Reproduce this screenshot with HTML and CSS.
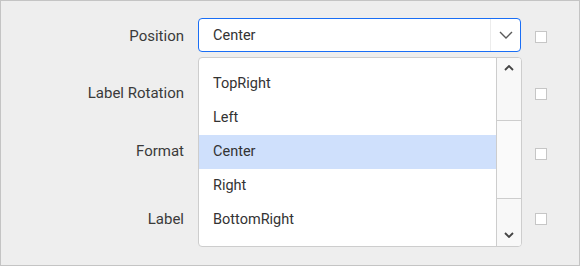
FILE: index.html
```html
<!DOCTYPE html>
<html lang="en">
<head>
    <meta charset="UTF-8">
    <title>Data Label Settings</title>
    <link rel="stylesheet" href="styles.css">
</head>
<body>
    <div class="panel">
        <div class="form-grid">
            <label class="field-label">Position</label>
            <div class="select">
                <span class="select-value">Center</span>
                <span class="select-toggle">
                    <svg width="14" height="8" viewBox="0 0 14 8"><path d="M1 1 L7 7 L13 1" fill="none" stroke="#5a5a5a" stroke-width="1.4"/></svg>
                </span>
            </div>
            <span class="check first"></span>

            <label class="field-label rotation">Label Rotation</label>
            <div class="spacer"></div>
            <span class="check"></span>

            <label class="field-label format">Format</label>
            <div class="spacer"></div>
            <span class="check"></span>

            <label class="field-label label">Label</label>
            <div class="spacer"></div>
            <span class="check"></span>
        </div>

        <div class="popup">
            <ul class="options">
                <li>TopRight</li>
                <li>Left</li>
                <li class="active">Center</li>
                <li>Right</li>
                <li>BottomRight</li>
            </ul>
            <div class="scrollbar">
                <div class="scroll-btn up">
                    <svg width="10" height="6" viewBox="0 0 10 6"><path d="M1 5 L5 1 L9 5" fill="none" stroke="#444" stroke-width="1.8"/></svg>
                </div>
                <div class="scroll-thumb"></div>
                <div class="scroll-btn down">
                    <svg width="10" height="6" viewBox="0 0 10 6"><path d="M1 1 L5 5 L9 1" fill="none" stroke="#444" stroke-width="1.8"/></svg>
                </div>
            </div>
        </div>
    </div>
</body>
</html>
```

FILE: styles.css
```css
body {
    margin: 0;
    background: #fff;
    font-family: Roboto, "Liberation Sans", sans-serif;
    font-size: 14px;
    color: #333;
}
.panel {
    position: relative;
    box-sizing: border-box;
    width: 580px;
    height: 266px;
    background: #eeeeee;
    border: 1px solid #c4c4c4;
}
.form-grid {
    display: grid;
    grid-template-columns: 183px 324px 12px;
    grid-template-rows: 59px 60px 65px 34px;
    column-gap: 13px;
    align-items: start;
    padding-top: 17px;
}
.field-label {
    height: 34px;
    line-height: 36px;
    text-align: right;
    font-size: 15px;
    color: #3a3a3a;
}
.field-label.rotation {
    margin-top: -2px;
}
.field-label.format {
    margin-top: -4px;
}
.field-label.label {
    margin-top: -1px;
}
.form-grid > .select {
    margin-left: 1px;
}
.select {
    box-sizing: border-box;
    height: 34px;
    display: flex;
    align-items: center;
    background: #fff;
    border: 1px solid #1a6ef5;
    border-radius: 4px;
    font-size: 14.5px;
}
.select-value {
    flex: 1;
    padding-left: 14px;
}
.select-toggle {
    width: 29px;
    height: 100%;
    display: flex;
    align-items: center;
    justify-content: center;
    border-left: 1px solid #ececec;
}
.spacer {
    height: 34px;
}
.check {
    box-sizing: border-box;
    width: 12px;
    height: 12px;
    margin-top: 11px;
    margin-left: 1px;
    background: #fff;
    border: 1px solid #c6c6c6;
}
.check.first {
    margin-top: 13px;
}
.popup {
    position: absolute;
    left: 197px;
    top: 56px;
    box-sizing: border-box;
    width: 324px;
    height: 190px;
    display: flex;
    background: #fff;
    border: 1px solid #cdcdcd;
    border-radius: 4px;
    overflow: hidden;
}
.options {
    flex: 1;
    list-style: none;
    margin: 0;
    padding: 9px 0 0;
    overflow: hidden;
    font-size: 14.5px;
}
.options li {
    height: 34px;
    line-height: 34px;
    padding-left: 14px;
}
.options li.active {
    background: #cfe0fc;
}
.scrollbar {
    width: 24px;
    display: flex;
    flex-direction: column;
    background: #f8f8f8;
    border-left: 1px solid #cdcdcd;
}
.scroll-btn {
    display: flex;
    justify-content: center;
}
.scroll-btn.up {
    height: 62px;
    padding-top: 7px;
    box-sizing: border-box;
}
.scroll-thumb {
    height: 77px;
    background: #fafafa;
    border-top: 1px solid #cdcdcd;
    border-bottom: 1px solid #cdcdcd;
}
.scroll-btn.down {
    flex: 1;
    align-items: flex-end;
    padding-bottom: 8px;
}
```
